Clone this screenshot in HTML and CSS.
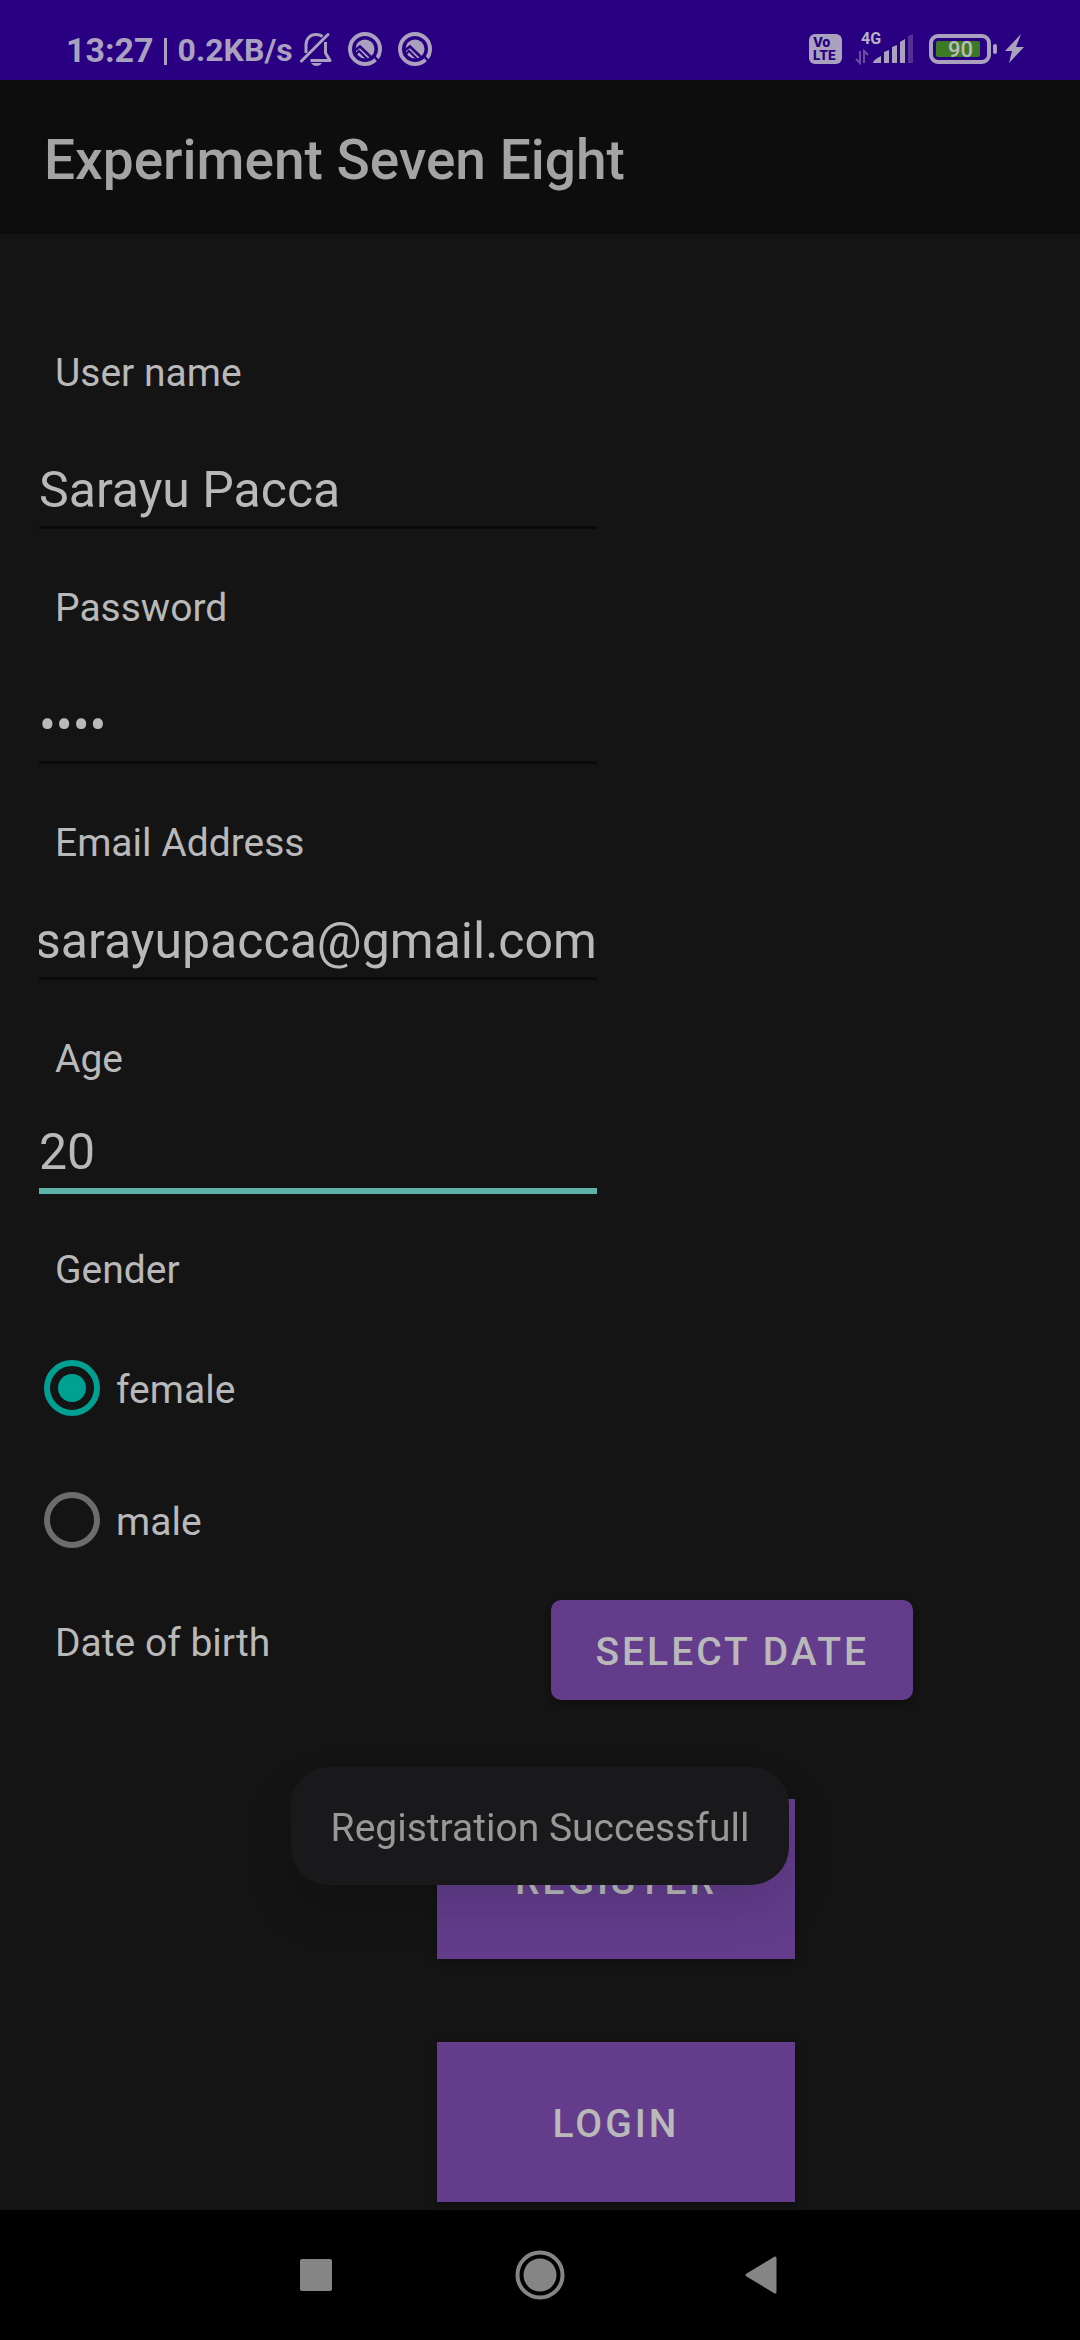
FILE: index.html
```html
<!DOCTYPE html>
<html lang="en">
<head>
<meta charset="utf-8">
<meta name="viewport" content="width=device-width, initial-scale=1">
<title>Experiment Seven Eight</title>
<link rel="stylesheet" href="styles.css">
</head>
<body>
<div class="screen">
  <div class="status-bar">
    <div class="status-left">
      <span class="clock">13:27</span>
      <span class="divider"></span>
      <span class="speed">0.2KB/s</span>
      <svg class="bell" width="32" height="34" viewBox="0 0 32 34" aria-hidden="true">
        <path d="M6 21V13C6 6.500 10.500 2.500 16 2.500C18.500 2.500 20.500 3 22.500 4.500M25.500 10V21L30 28.500H10.500" fill="none" stroke="currentColor" stroke-width="3" stroke-linejoin="round"/>
        <path d="M1.500 29L28 2.500" stroke="currentColor" stroke-width="3" stroke-linecap="round"/>
        <path d="M11 31H22Q20 34 16.500 34T11 31Z" fill="currentColor"/>
      </svg>
      <svg class="app-icon" width="34" height="34" viewBox="0 0 34 34" aria-hidden="true">
        <circle cx="17" cy="17" r="15" fill="none" stroke="currentColor" stroke-width="4"/>
        <circle cx="17" cy="17" r="9.500" fill="currentColor"/>
        <path d="M6 19L12 14.500L25 27M26 24L32 31" fill="none" stroke="#290081" stroke-width="2.500"/>
        <path d="M6 24L11 19L20 28" fill="none" stroke="#290081" stroke-width="2"/>
      </svg>
      <svg class="app-icon" width="34" height="34" viewBox="0 0 34 34" aria-hidden="true">
        <circle cx="17" cy="17" r="15" fill="none" stroke="currentColor" stroke-width="4"/>
        <circle cx="17" cy="17" r="9.500" fill="currentColor"/>
        <path d="M6 19L12 14.500L25 27M26 24L32 31" fill="none" stroke="#290081" stroke-width="2.500"/>
        <path d="M6 24L11 19L20 28" fill="none" stroke="#290081" stroke-width="2"/>
      </svg>
    </div>
    <div class="status-right">
      <div class="volte"><span>Vo</span><span>LTE</span></div>
      <svg class="signal" width="58" height="34" viewBox="0 0 58 34" role="img" aria-label="4G signal">
        <text class="network" x="5" y="12">4G</text>
        <path d="M4 19V31L0 27M8 31V19L12 23" fill="none" stroke="#6a4fa0" stroke-width="2"/>
        <path d="M17 31Q17 28 25 24V31ZM28 20L33 18V31H28ZM36 15L41 13V31H36ZM44 10L49 7V31H44Z" fill="currentColor"/>
        <path d="M52 4L57 2V31H52Z" fill="#533096"/>
      </svg>
      <div class="battery"><div class="battery-case"><span class="battery-level">90</span></div><span class="battery-tip"></span></div>
      <svg class="bolt" width="20" height="30" viewBox="0 0 20 30" aria-hidden="true">
        <path d="M16 0L0 17H7L4 29L19 13H11Z" fill="currentColor"/>
      </svg>
    </div>
  </div>

  <header class="app-bar"><h1>Experiment Seven Eight</h1></header>

  <main class="content">
    <form class="form">
      <div class="field field-roomy">
        <label for="username">User name</label>
        <input id="username" type="text" value="Sarayu Pacca">
      </div>
      <div class="field field-roomy">
        <label for="password">Password</label>
        <input id="password" type="password" value="1234">
      </div>
      <div class="field">
        <label for="email">Email Address</label>
        <input id="email" type="email" value="sarayupacca@gmail.com">
      </div>
      <div class="field field-active">
        <label for="age">Age</label>
        <input id="age" type="text" inputmode="numeric" value="20">
      </div>
      <fieldset class="gender">
        <legend>Gender</legend>
        <label class="option"><input type="radio" name="gender" value="female" checked><span>female</span></label>
        <label class="option"><input type="radio" name="gender" value="male"><span>male</span></label>
      </fieldset>
      <div class="date-row">
        <span class="date-label" id="dob">Date of birth</span>
        <button class="button button-date" type="button" aria-describedby="dob">SELECT DATE</button>
      </div>
      <div class="actions">
        <button class="button button-large" type="submit">REGISTER</button>
        <button class="button button-large" type="button">LOGIN</button>
      </div>
    </form>
  </main>

  <nav class="nav-bar" aria-label="System">
    <button type="button" aria-label="Recent apps"><svg width="50" height="50" viewBox="0 0 50 50"><rect x="9" y="9" width="32" height="32" rx="2" fill="currentColor"/></svg></button>
    <button type="button" aria-label="Home"><svg width="50" height="50" viewBox="0 0 50 50"><circle cx="25" cy="25" r="22.500" fill="none" stroke="currentColor" stroke-width="4"/><circle cx="25" cy="25" r="16.500" fill="currentColor"/></svg></button>
    <button type="button" aria-label="Back"><svg width="50" height="50" viewBox="0 0 50 50"><path d="M8 25L36 8V42Z" fill="currentColor" stroke="currentColor" stroke-width="3" stroke-linejoin="round"/></svg></button>
  </nav>

  <div class="toast-layer"><div class="toast" role="status">Registration Successfull</div></div>
</div>
<script src="script.js"></script>
</body>
</html>
```
FILE: styles.css
```css
:root {
  --text: #b9b9b9;
  --purple: #633d8c;
  --accent: #00a192;
}

* { box-sizing: border-box; }

body {
  margin: 0;
  background: #141414;
  color: var(--text);
  font-family: Roboto, "Liberation Sans", sans-serif;
  font-size: 39px;
  line-height: 46px;
}

button, input { font: inherit; color: inherit; }

.screen {
  display: flex;
  flex-direction: column;
  min-height: 100vh;
}

/* Status bar */
.status-bar {
  display: flex;
  justify-content: space-between;
  height: 80px;
  padding: 32px 55px 0 66px;
  background: #290081;
  color: #aaa1bf;
}

.status-left, .status-right {
  display: flex;
  align-items: center;
  height: 34px;
}

.clock, .speed { padding-top: 2px; font-weight: 700; }
.clock { font-size: 34px; }
.speed { font-size: 32px; }
.divider { width: 3px; height: 27px; margin: 4px 11px 0 10px; background: currentColor; }
.bell { margin-left: 7px; }
.app-icon { margin-left: 16px; }

.volte {
  display: flex;
  flex-direction: column;
  align-items: flex-start;
  width: 33px;
  height: 30px;
  padding: 2px 4px;
  border-radius: 6px;
  background: currentColor;
  font-family: Inter, Roboto, sans-serif;
  font-size: 13px;
  font-weight: 800;
  line-height: 13px;
}
.volte span { color: #290081; }

.signal { margin-left: 14px; overflow: visible; }
.network { fill: #b8b2c8; font-size: 16px; font-weight: 700; }

.battery { display: flex; align-items: center; gap: 2px; margin-left: 15px; }
.battery-case {
  width: 62px;
  height: 30px;
  padding: 3px;
  border: 4px solid currentColor;
  border-radius: 9px;
}
.battery-level {
  display: block;
  width: 44px;
  height: 16px;
  padding-right: 7px;
  border-radius: 2px;
  background: #3c7a26;
  color: #bdbdbd;
  font-size: 22px;
  font-weight: 500;
  line-height: 18px;
  text-align: right;
}
.battery-tip { width: 4px; height: 10px; border-radius: 2px; background: currentColor; }
.bolt { margin-left: 8px; }

/* App bar */
.app-bar {
  padding: 48px 44px 42px;
  background: #0d0d0d;
  color: #a4a4a4;
}
.app-bar h1 { margin: 0; font-size: 55px; font-weight: 500; line-height: 64px; }

/* Form */
.content { flex: 1; padding: 116px 39px 8px; }

.field {
  display: flex;
  flex-direction: column;
  gap: 45px;
  max-width: 558px;
  margin-bottom: 56px;
}
.field-roomy { gap: 64px; }
.field-active { gap: 40px; margin-bottom: 53px; }

.field label, .gender legend, .date-label { padding: 0 16px; }

.field input {
  width: 100%;
  height: 69px;
  padding: 0 0 6px;
  border: 0;
  border-bottom: 3px solid #0a0a0a;
  border-radius: 0;
  outline: 0;
  background: transparent;
  font-size: 50px;
  line-height: 60px;
}
.field-active input { height: 72px; border-bottom: 6px solid #5bb3a7; }

.gender { margin: 0; padding: 0; border: 0; }
.gender legend { margin-bottom: 29px; }

.option {
  display: flex;
  align-items: center;
  gap: 16px;
  height: 132px;
  padding-left: 5px;
}
.option span { padding-top: 3px; }
.option input {
  appearance: none;
  display: grid;
  place-items: center;
  width: 56px;
  height: 56px;
  margin: 0;
  border: 6px solid #6c6c6c;
  border-radius: 50%;
}
.option input:checked { border-color: var(--accent); }
.option input:checked::before {
  content: "";
  width: 28px;
  height: 28px;
  border-radius: 50%;
  background: var(--accent);
}

.date-row {
  display: flex;
  justify-content: space-between;
  padding: 14px 128px 0 0;
}
.date-label { padding-top: 20px; }

.button {
  padding: 4px 44px 0;
  border: 0;
  background: var(--purple);
  font-weight: 500;
  letter-spacing: 3px;
  box-shadow: 0 3px 6px rgba(0, 0, 0, 0.3);
}
.button-date { height: 100px; border-radius: 10px; }

.actions {
  display: flex;
  flex-direction: column;
  align-items: center;
  gap: 83px;
  padding: 99px 0 0 152px;
}
.button-large { width: 358px; height: 160px; }

/* Toast */
.toast-layer {
  position: fixed;
  right: 0;
  bottom: 455px;
  left: 0;
  display: flex;
  justify-content: center;
  pointer-events: none;
}
.toast {
  padding: 38px 40px 34px;
  border-radius: 38px;
  background: #19191b;
  color: #989898;
  box-shadow: 0 24px 48px rgba(0, 0, 0, 0.13);
}

/* Navigation bar */
.nav-bar {
  display: flex;
  justify-content: center;
  gap: 174px;
  height: 130px;
  background: #000;
  color: #858585;
}
.nav-bar button { display: flex; align-items: center; padding: 0; border: 0; background: none; }
```
FILE: script.js
```js
// Keep the end of a long address in view.
const email = document.getElementById("email");
email.scrollLeft = email.scrollWidth;
```
